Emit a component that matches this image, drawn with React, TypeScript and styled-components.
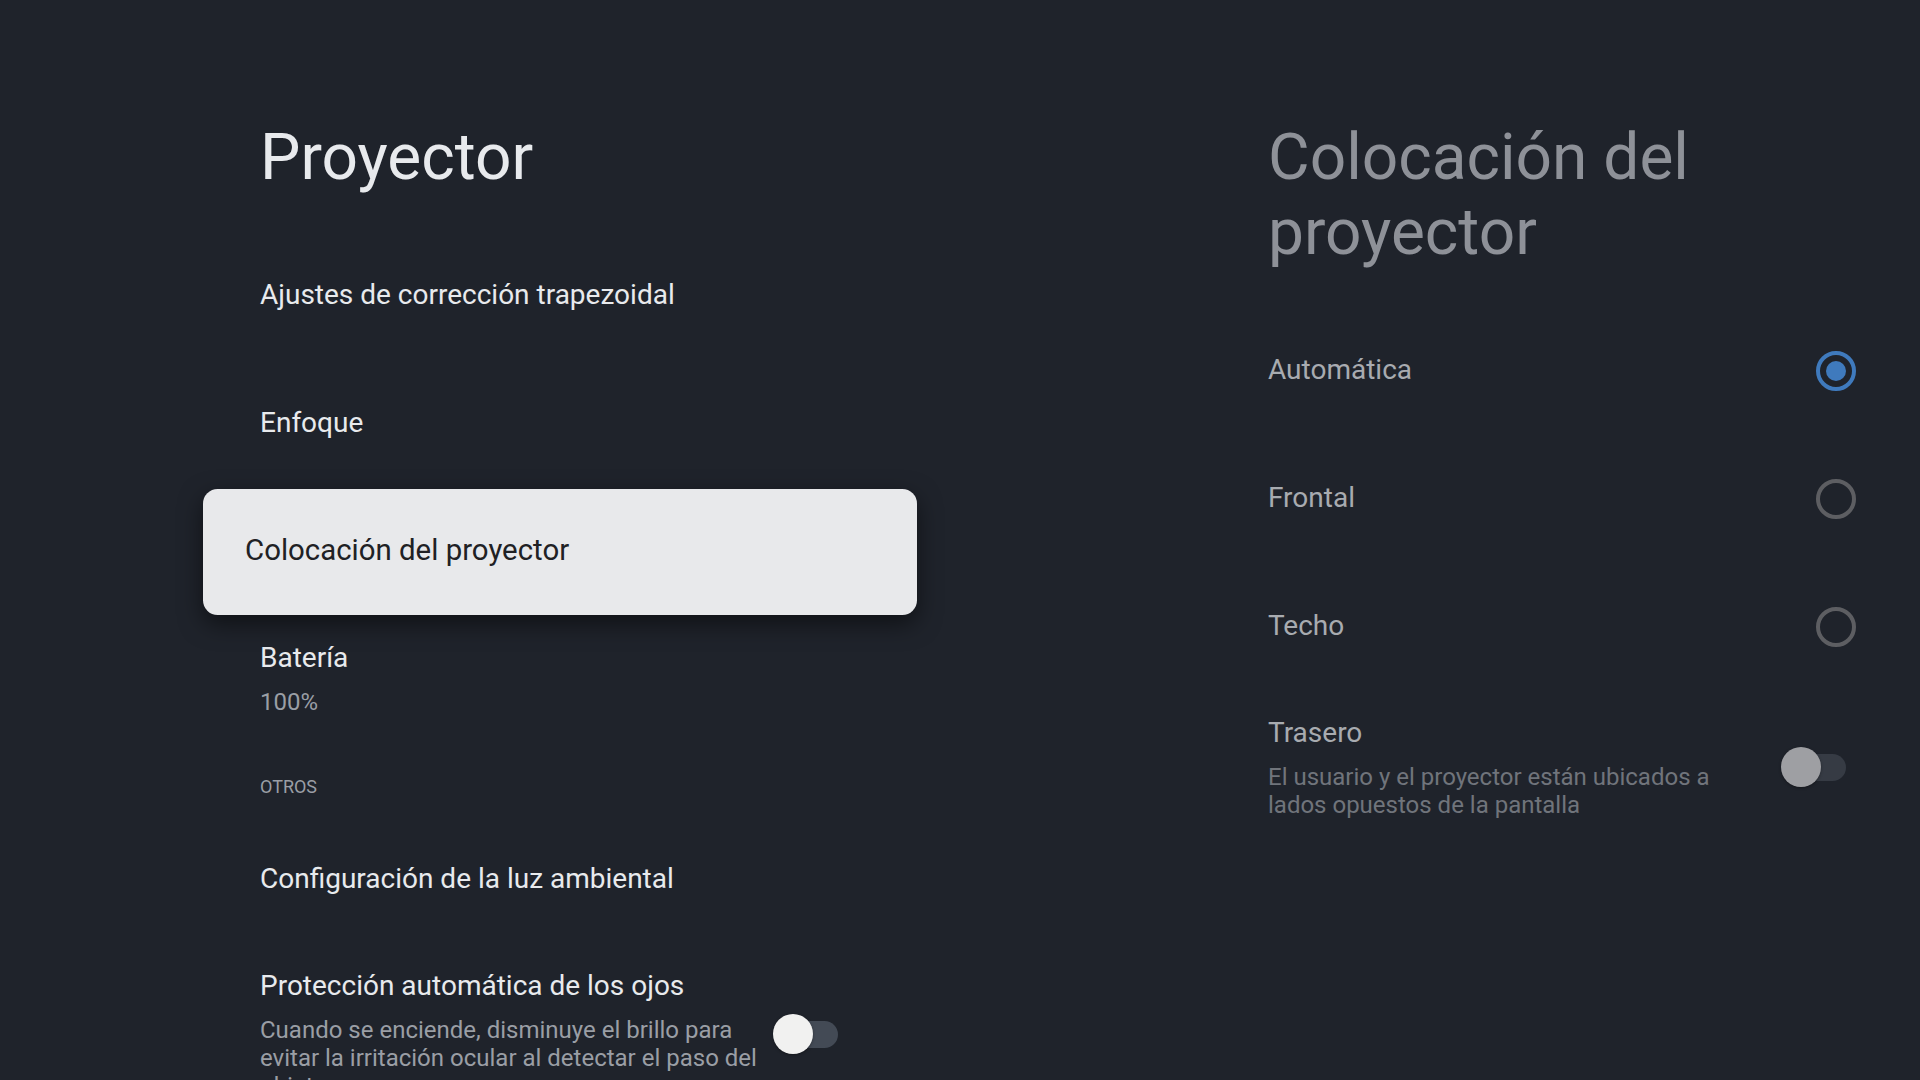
import styled, { createGlobalStyle } from 'styled-components';

const GlobalStyle = createGlobalStyle`
  body {
    margin: 0;
    background: #1f232b;
    overflow: hidden;
  }
`;

type Item = {
    label: string;
    summary?: string;
    focused?: boolean;
    toggle?: 'on' | 'off';
};

const leftItems: Item[] = [
    { label: 'Ajustes de corrección trapezoidal' },
    { label: 'Enfoque' },
    { label: 'Colocación del proyector', focused: true },
    { label: 'Batería', summary: '100%' },
];

const otherItems: Item[] = [
    { label: 'Configuración de la luz ambiental' },
    {
        label: 'Protección automática de los ojos',
        summary: 'Cuando se enciende, disminuye el brillo para evitar la irritación ocular al detectar el paso del objeto.',
        toggle: 'on',
    },
];

const placements = [
    { label: 'Automática', checked: true },
    { label: 'Frontal', checked: false },
    { label: 'Techo', checked: false },
];

const Toggle = ({ light, inset }: { light?: boolean; inset: number }) => (
    <SwitchBox $inset={inset}>
        <Track $light={light} />
        <Thumb $light={light} />
    </SwitchBox>
);

const PrefRow = ({ item }: { item: Item }) => {
    const twoLine = !!item.summary;
    return (
        <Row $twoLine={twoLine} $focused={item.focused}>
            <TextBlock $twoLine={twoLine}>
                <Label $color={item.focused ? '#202124' : '#e8eaed'}>{item.label}</Label>
                {item.summary && <Summary $color="#9a9ea5" $maxWidth={508}>{item.summary}</Summary>}
            </TextBlock>
            {item.toggle && <Toggle light inset={22} />}
        </Row>
    );
};

const App = (): JSX.Element => {
    return (
        <>
            <GlobalStyle />
            <Page>
                <LeftPanel>
                    <Title $color="#e8eaed">Proyector</Title>
                    <List>
                        {leftItems.map(item => <PrefRow key={item.label} item={item} />)}
                        <Category>OTROS</Category>
                        {otherItems.map(item => <PrefRow key={item.label} item={item} />)}
                    </List>
                </LeftPanel>
                <RightPanel>
                    <Title $color="#8e9198">Colocación del proyector</Title>
                    <List>
                        {placements.map(p =>
                            <Row key={p.label}>
                                <TextBlock>
                                    <Label $color="#a8abb0">{p.label}</Label>
                                </TextBlock>
                                <Radio $checked={p.checked}>
                                    {p.checked && <Dot />}
                                </Radio>
                            </Row>
                        )}
                        <Row $twoLine>
                            <TextBlock $twoLine>
                                <Label $color="#a8abb0">Trasero</Label>
                                <Summary $color="#70747b" $maxWidth={480}>
                                    El usuario y el proyector están ubicados a lados opuestos de la pantalla
                                </Summary>
                            </TextBlock>
                            <Toggle inset={10} />
                        </Row>
                    </List>
                </RightPanel>
            </Page>
        </>
    );
};

export default App;


const Page = styled.div`
  display: flex;
  height: 1080px;
  background: #1f232b;
  font-family: Roboto, "Noto Sans", sans-serif;
  overflow: hidden;
`;

const LeftPanel = styled.div`
  width: 680px;
  padding: 120px 0 0 220px;
`;

const RightPanel = styled.div`
  width: 668px;
  margin-left: 328px;
  padding-top: 120px;
`;

const Title = styled.h1<{ $color: string }>`
  margin: 0 0 41px;
  padding: 0 40px;
  font-size: 64px;
  line-height: 75px;
  font-weight: 400;
  color: ${p => p.$color};
`;

const List = styled.div`
  display: flex;
  flex-direction: column;
  gap: 8px;
`;

const Row = styled.div<{ $twoLine?: boolean; $focused?: boolean }>`
  display: flex;
  align-items: center;
  box-sizing: border-box;
  min-height: ${p => (p.$twoLine ? 'auto' : '120px')};
  padding: ${p => (p.$twoLine ? '20px 40px 16px' : '0 40px')};
  border-radius: 14px;
  background: ${p => (p.$focused ? '#e8e9eb' : 'transparent')};
  transform: ${p => (p.$focused ? 'scale(1.05)' : 'none')};
  box-shadow: ${p => (p.$focused ? '0 8px 22px rgba(0, 0, 0, 0.5)' : 'none')};
`;

const TextBlock = styled.div<{ $twoLine?: boolean }>`
  flex: 1;
  min-width: 0;
  padding-bottom: ${p => (p.$twoLine ? '0' : '3px')};
`;

const Label = styled.div<{ $color: string }>`
  font-size: 28px;
  line-height: 36px;
  color: ${p => p.$color};
`;

const Summary = styled.div<{ $color: string; $maxWidth?: number }>`
  margin-top: 12px;
  font-size: 24px;
  line-height: 28px;
  color: ${p => p.$color};
  max-width: ${p => (p.$maxWidth ? `${p.$maxWidth}px` : 'none')};
`;

const Category = styled.div`
  padding: 35px 40px 13px;
  font-size: 18px;
  line-height: 24px;
  color: #9a9ea5;
`;

const Radio = styled.span<{ $checked?: boolean }>`
  display: flex;
  align-items: center;
  justify-content: center;
  width: 40px;
  height: 40px;
  box-sizing: border-box;
  border-radius: 50%;
  border: 4px solid ${p => (p.$checked ? '#3f7abd' : '#5d5e62')};
`;

const Dot = styled.span`
  width: 20px;
  height: 20px;
  border-radius: 50%;
  background: #3f7abd;
`;

const SwitchBox = styled.div<{ $inset: number }>`
  position: relative;
  flex: none;
  width: 65px;
  height: 40px;
  margin-right: ${p => p.$inset}px;
`;

const Track = styled.span<{ $light?: boolean }>`
  position: absolute;
  left: 13px;
  top: 7px;
  width: 52px;
  height: 27px;
  border-radius: 14px;
  background: ${p => (p.$light ? '#434a55' : '#363b44')};
`;

const Thumb = styled.span<{ $light?: boolean }>`
  position: absolute;
  left: 0;
  top: 0;
  width: 40px;
  height: 40px;
  border-radius: 50%;
  background: ${p => (p.$light ? '#f1f1f0' : '#9e9fa3')};
  box-shadow: 0 1px 3px rgba(0, 0, 0, 0.35);
`;
